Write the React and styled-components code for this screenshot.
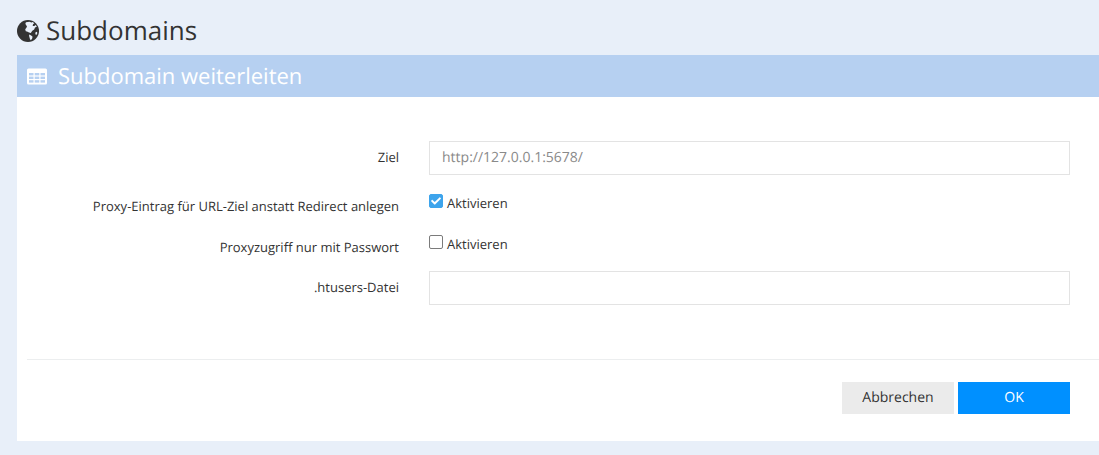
import React from "react";
import styled, { createGlobalStyle } from "styled-components";
import { FaCheck } from "react-icons/fa";

const GlobalStyle = createGlobalStyle`
  html, body {
    margin: 0;
    padding: 0;
    background: #e8eff9;
    font-family: "Open Sans", sans-serif;
    color: #333;
    overflow: hidden;
    text-rendering: geometricPrecision;
  }
  input, button {
    text-rendering: geometricPrecision;
  }
`;

const Page = styled.div`
  height: 455px;
  padding: 10px 0 0 17px;
  box-sizing: border-box;
`;

const PageTitle = styled.h1`
  display: flex;
  align-items: center;
  gap: 7px;
  height: 45px;
  padding-bottom: 6px;
  box-sizing: border-box;
  margin: 0;
  font-size: 26px;
  font-weight: 400;
  line-height: 36px;
  color: #333;
  svg {
    margin-top: 3px;
  }
`;

const Panel = styled.section`
  background: #fff;
  height: 386px;
`;

const PanelHead = styled.div`
  display: flex;
  align-items: center;
  gap: 11px;
  height: 42px;
  padding-left: 10px;
  background: #b6d0f1;
  color: #fff;
  font-size: 22px;
`;

const Form = styled.form`
  display: flex;
  flex-direction: column;
  padding: 44px 29px 0 10px;
  height: 262px;
  box-sizing: border-box;
`;

const Row = styled.div`
  display: grid;
  grid-template-columns: 372px 1fr;
  column-gap: 30px;
  height: ${(p) => p.$h}px;
  flex: none;
  font-size: 13px;
`;

const Label = styled.label`
  text-align: right;
  line-height: 18px;
  padding-top: ${(p) => p.$top}px;
  color: #333;
`;

const TextInput = styled.input`
  width: 100%;
  height: 34px;
  box-sizing: border-box;
  padding: 0 12px 1px;
  border: 1px solid #e3e3e3;
  outline: none;
  font: 14px "Open Sans", sans-serif;
  color: #333;
  &::placeholder {
    color: #8a8a8a;
  }
`;

const CheckWrap = styled.div`
  display: flex;
  align-items: center;
  gap: 4px;
  height: 18px;
  padding-top: ${(p) => p.$top}px;
  font-size: 13px;
  line-height: 18px;
`;

const CheckText = styled.span`
  padding-top: 3px;
`;

const Box = styled.span`
  display: flex;
  align-items: center;
  justify-content: center;
  width: 14px;
  height: 14px;
  border-radius: 2px;
  box-sizing: border-box;
  border: 1px solid ${(p) => (p.$on ? "#3da4ec" : "#7b7b7b")};
  background: ${(p) => (p.$on ? "#3da4ec" : "#fff")};
  color: #fff;
  svg {
    width: 10px;
    height: 10px;
  }
`;

const Footer = styled.div`
  margin-left: 10px;
  border-top: 1px solid #eceeef;
  padding: 22px 29px 0 0;
  display: flex;
  justify-content: flex-end;
  gap: 4px;
`;

const Button = styled.button`
  width: 112px;
  height: 32px;
  border: none;
  padding: 0 0 1px;
  font: 14px "Open Sans", sans-serif;
  background: ${(p) => (p.$primary ? "#0090ff" : "#ebebeb")};
  color: ${(p) => (p.$primary ? "#fff" : "#333")};
`;

const GlobeIcon = () => (
  <svg width="22" height="22" viewBox="0 0 22 22">
    <circle cx="11" cy="11" r="11" fill="#333" />
    <path
      d="M9 2.2l3.5-.5 2 .8 1.2-.4 1.6 1.2-1.3 1-.3 1.6 1.6.2 1.5-1 1 1.6-1.8.9-.8 2-1.9 1.2-1.5 2.2-1.8-.6-2-1-1.2-.2-.6-2 1.2-1.4.6-1.6-1.2-1.4-.4-1.6z"
      fill="#e8eff9"
    />
    <path d="M12 14.6l2.2.8 1.4 1.4-.6 2.2-1.4 1.2-.8-1.8-.6-2.2z" fill="#e8eff9" />
    <path d="M18.4 12.4l1.4-.6.6 1.2-1 2-1-.8z" fill="#e8eff9" />
  </svg>
);

const TableIcon = () => (
  <svg width="20" height="17" viewBox="0 0 20 17">
    <rect x="0" y="0.5" width="20" height="16" rx="1.5" fill="#fff" />
    <g fill="#b6d0f1">
      <rect x="2" y="5" width="4.5" height="2.4" />
      <rect x="7.7" y="5" width="4.6" height="2.4" />
      <rect x="13.5" y="5" width="4.5" height="2.4" />
      <rect x="2" y="8.6" width="4.5" height="2.4" />
      <rect x="7.7" y="8.6" width="4.6" height="2.4" />
      <rect x="13.5" y="8.6" width="4.5" height="2.4" />
      <rect x="2" y="12.2" width="4.5" height="2.4" />
      <rect x="7.7" y="12.2" width="4.6" height="2.4" />
      <rect x="13.5" y="12.2" width="4.5" height="2.4" />
    </g>
  </svg>
);

const CheckRow = ({ label, on, labelTop, boxTop }) => (
  <Row $h={42}>
    <Label $top={labelTop}>{label}</Label>
    <CheckWrap $top={boxTop}>
      <Box $on={on}>{on && <FaCheck />}</Box>
      <CheckText>Aktivieren</CheckText>
    </CheckWrap>
  </Row>
);

export default function App() {
  return (
    <Page>
      <GlobalStyle />
      <PageTitle>
        <GlobeIcon />
        Subdomains
      </PageTitle>
      <Panel>
        <PanelHead>
          <TableIcon />
          Subdomain weiterleiten
        </PanelHead>
        <Form>
          <Row $h={46}>
            <Label $top={7}>Ziel</Label>
            <TextInput placeholder="http://127.0.0.1:5678/" />
          </Row>
          <CheckRow label="Proxy-Eintrag für URL-Ziel anstatt Redirect anlegen" on labelTop={10} boxTop={5} />
          <CheckRow label="Proxyzugriff nur mit Passwort" labelTop={9} boxTop={4} />
          <Row $h={34}>
            <Label $top={7}>.htusers-Datei</Label>
            <TextInput />
          </Row>
        </Form>
        <Footer>
          <Button type="button">Abbrechen</Button>
          <Button type="button" $primary>OK</Button>
        </Footer>
      </Panel>
    </Page>
  );
}
